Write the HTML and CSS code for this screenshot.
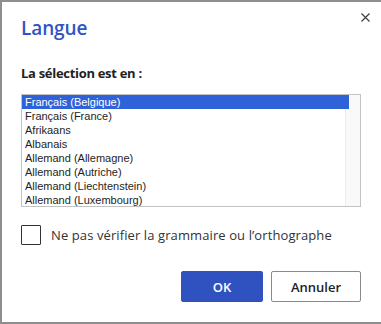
FILE: index.html
```html
<!DOCTYPE html>
<html lang="fr">
<head>
    <meta charset="UTF-8">
    <meta name="viewport" content="width=device-width, initial-scale=1.0">
    <title>Langue</title>
    <link rel="stylesheet" href="styles.css">
</head>
<body>

    <div class="frame">
        <div class="dialog">
            <div class="header">
                <h1>Langue</h1>
                <button class="close" aria-label="Fermer">
                    <svg width="9" height="9" viewBox="0 0 9 9">
                        <path d="M0.5 0.5 L8.5 8.5 M8.5 0.5 L0.5 8.5" stroke="#3a3a3a" stroke-width="1.1" fill="none"/>
                    </svg>
                </button>
            </div>

            <p class="label">La sélection est en :</p>

            <div class="listbox">
                <ul class="options">
                    <li class="selected">Français (Belgique)</li>
                    <li>Français (France)</li>
                    <li>Afrikaans</li>
                    <li>Albanais</li>
                    <li>Allemand (Allemagne)</li>
                    <li>Allemand (Autriche)</li>
                    <li>Allemand (Liechtenstein)</li>
                    <li>Allemand (Luxembourg)</li>
                </ul>
                <div class="track"></div>
            </div>

            <label class="check">
                <span class="box"></span>
                Ne pas vérifier la grammaire ou l’orthographe
            </label>

            <div class="actions">
                <button class="btn primary">OK</button>
                <button class="btn">Annuler</button>
            </div>
        </div>
    </div>

</body>
</html>
```

FILE: styles.css
```css
body {
    margin: 0;
    font-family: "Open Sans", "Noto Sans", sans-serif;
    background-color: #ffffff;
}
.frame {
    width: 381px;
    height: 324px;
    box-sizing: border-box;
    border-top: 2px solid #8e8e8e;
    border-left: 2px solid #8e8e8e;
    border-bottom: 2px solid #8e8e8e;
    background-color: #ffffff;
}
.dialog {
    padding: 0 20px 0 19px;
}
.header {
    display: flex;
    justify-content: space-between;
    align-items: flex-start;
    height: 44px;
}
h1 {
    margin: 0;
    padding-top: 14px;
    font-size: 19px;
    font-weight: 600;
    line-height: 24px;
    color: #2f55c4;
    letter-spacing: -0.1px;
}
.close {
    border: none;
    background: none;
    padding: 0;
    margin: 11px -9px 0 0;
    width: 9px;
    height: 9px;
    cursor: pointer;
}
.close svg {
    display: block;
}
.label {
    margin: 18px 0 0;
    font-size: 13px;
    font-weight: 700;
    line-height: 18px;
    color: #222;
    letter-spacing: -0.3px;
}
.listbox {
    display: flex;
    margin-top: 12px;
    width: 340px;
    height: 113px;
    box-sizing: border-box;
    border: 1px solid #c3c3c3;
    overflow: hidden;
}
.options {
    list-style: none;
    margin: 0;
    padding: 0;
    flex: 1;
    position: relative;
    z-index: 1;
    margin-right: -4px;
}
.options li {
    height: 14px;
    line-height: 14px;
    padding-left: 3px;
    font-family: "Liberation Sans", Arial, sans-serif;
    font-size: 11px;
    color: #1e1e1e;
    white-space: nowrap;
}
.options li.selected {
    background-color: #2f61d8;
    color: #ffffff;
}
.track {
    width: 15px;
    box-sizing: border-box;
    border-left: 1px solid #ececec;
    background-color: #f9f9f9;
}
.check {
    display: flex;
    align-items: center;
    gap: 10px;
    margin-top: 18px;
    font-size: 13px;
    color: #333;
    letter-spacing: 0.1px;
}
.box {
    width: 20px;
    height: 20px;
    box-sizing: border-box;
    border: 1px solid #333;
    border-radius: 1px;
}
.actions {
    display: flex;
    justify-content: flex-end;
    gap: 8px;
    margin-top: 26px;
}
.btn {
    height: 31px;
    width: 90px;
    box-sizing: border-box;
    border: 1px solid #8a8a8a;
    border-radius: 2px;
    background-color: #ffffff;
    font-family: "Open Sans", "Noto Sans", sans-serif;
    font-size: 13px;
    font-weight: 600;
    color: #222;
}
.btn.primary {
    width: 82px;
    border-color: #3052c0;
    background-color: #3052c0;
    color: #ffffff;
}
```
